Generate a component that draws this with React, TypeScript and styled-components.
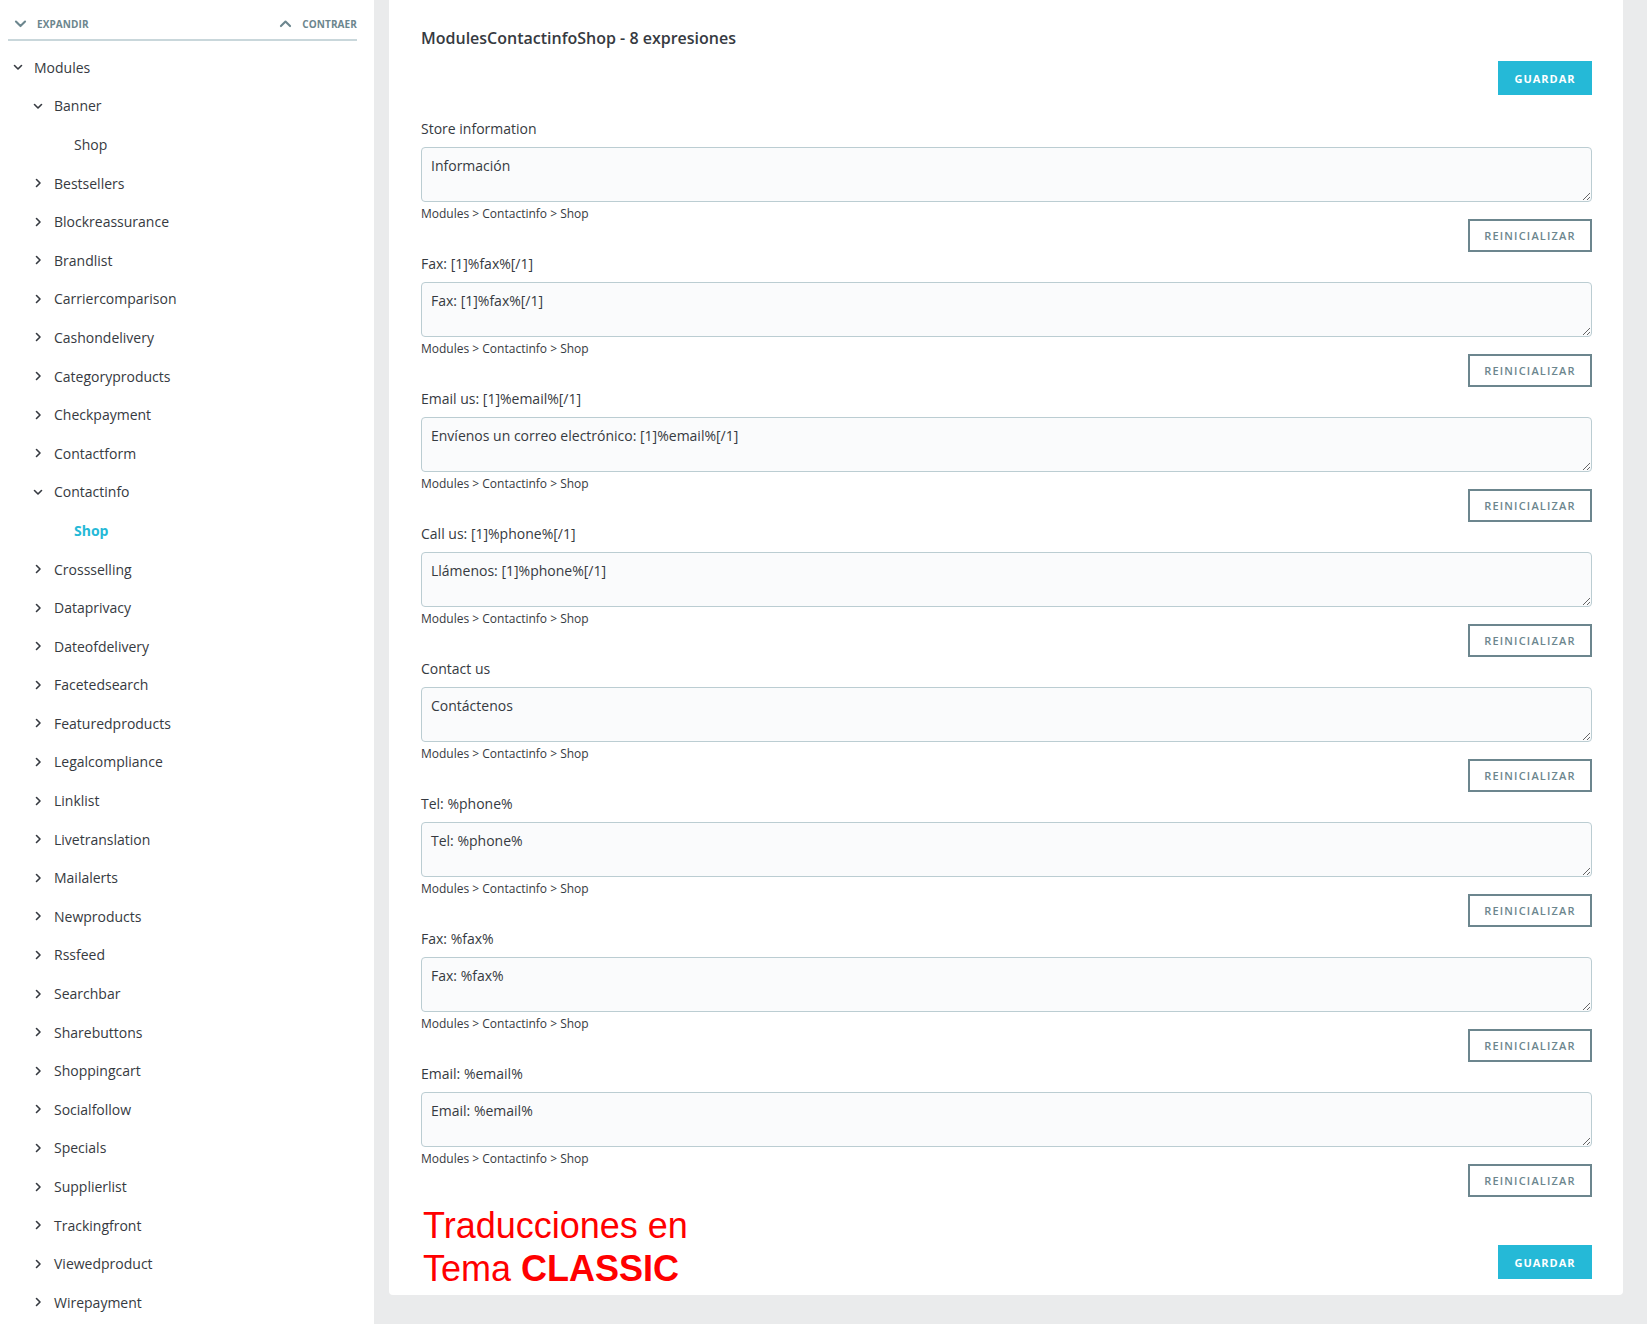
import React from 'react'
import styled, { createGlobalStyle } from 'styled-components'

const GlobalStyle = createGlobalStyle`
  html, body {
    margin: 0;
    padding: 0;
    background: #eaebec;
    font-family: "Open Sans", "Noto Sans", sans-serif;
    color: #363a41;
  }
  * { box-sizing: border-box; }
`;

const Page = styled.div`
  display: flex;
  align-items: stretch;
  min-height: 1324px;
`;

const Sidebar = styled.aside`
  width: 374px;
  flex-shrink: 0;
  background: #fff;
  padding: 0 17px 0 8px;
`;

const TreeHeader = styled.div`
  height: 41px;
  display: flex;
  align-items: center;
  justify-content: space-between;
  border-bottom: 2px solid #c9d7db;
  padding: 8px 0 0 6px;
`;

const HeaderLink = styled.span`
  display: flex;
  align-items: center;
  gap: 10px;
  font-size: 10px;
  font-weight: 700;
  color: #6c868e;
  text-transform: uppercase;
  letter-spacing: 0.1px;
`;

const TreeList = styled.ul`
  list-style: none;
  margin: 0;
  padding: 7px 0 0;
  margin-left: -8px;
`;

const TreeRow = styled.li<{ $level: number; $active?: boolean }>`
  height: 38.6px;
  display: flex;
  align-items: center;
  padding-left: ${p => 13 + p.$level * 20}px;
  font-size: 14px;
  color: ${p => (p.$active ? '#25b9d7' : '#363a41')};
  font-weight: ${p => (p.$active ? 700 : 400)};
`;

const Caret = styled.span`
  width: 10px;
  height: 10px;
  margin-right: 11px;
  display: inline-flex;
  align-items: center;
  justify-content: center;
`;

const Main = styled.main`
  flex: 1;
  padding: 0 24px 28px 15px;
`;

const Card = styled.section`
  background: #fff;
  border-radius: 0 0 4px 4px;
  padding: 26px 31px 5px 32px;
`;

const Title = styled.h2`
  margin: 0;
  font-size: 16px;
  line-height: 24px;
  font-weight: 600;
`;

const TopActions = styled.div`
  display: flex;
  justify-content: flex-end;
  margin: 11px 0 24px;
`;

const PrimaryButton = styled.button`
  width: 94px;
  height: 34px;
  border: none;
  background: #25b9d7;
  color: #fff;
  font-family: inherit;
  font-size: 11px;
  font-weight: 700;
  letter-spacing: 1px;
  text-transform: uppercase;
`;

const Field = styled.div`
  display: flex;
  flex-direction: column;
  margin-bottom: 2px;
`;

const Label = styled.label`
  font-size: 14px;
  line-height: 20px;
  margin-bottom: 8px;
`;

const Area = styled.textarea`
  height: 55px;
  width: 100%;
  resize: vertical;
  background: #fafbfc;
  border: 1px solid #bbcdd2;
  border-radius: 4px;
  padding: 8px 9px;
  font-family: inherit;
  font-size: 14px;
  line-height: 20px;
  color: #363a41;
  outline: none;
`;

const Crumb = styled.div`
  font-size: 12px;
  line-height: 14px;
  margin-top: 5px;
`;

const FieldActions = styled.div`
  display: flex;
  justify-content: flex-end;
  margin-top: -2px;
`;

const OutlineButton = styled.button`
  width: 124px;
  height: 33px;
  background: #fff;
  border: 2px solid #6c868e;
  color: #6c868e;
  font-family: inherit;
  font-size: 11px;
  font-weight: 600;
  letter-spacing: 1.2px;
  text-transform: uppercase;
`;

const Footer = styled.div`
  display: flex;
  justify-content: space-between;
  align-items: flex-end;
  margin-top: 7px;
`;

const Note = styled.div`
  font-family: "Liberation Sans", Arial, sans-serif;
  font-size: 36px;
  line-height: 43px;
  color: #ff0000;
  padding-left: 2px;
  b { font-weight: 700; }
`;

const FooterButton = styled(PrimaryButton)`
  margin-bottom: 11px;
`;

const Chevron = ({ dir, color = '#363a41', size = 10 }: { dir: 'down' | 'right' | 'up'; color?: string; size?: number }) => {
  const pts = dir === 'down' ? '1.5,3.5 5,7 8.5,3.5' : dir === 'up' ? '1.5,7 5,3.5 8.5,7' : '3.5,1.5 7,5 3.5,8.5';
  return (
    <svg width={size} height={size} viewBox="0 0 10 10">
      <polyline points={pts} fill="none" stroke={color} strokeWidth="1.6" strokeLinecap="round" strokeLinejoin="round" />
    </svg>
  );
};

type Node = { label: string; level: number; open?: boolean; leaf?: boolean; active?: boolean };

const names = [
  'Bestsellers', 'Blockreassurance', 'Brandlist', 'Carriercomparison', 'Cashondelivery',
  'Categoryproducts', 'Checkpayment', 'Contactform',
];
const after = [
  'Crossselling', 'Dataprivacy', 'Dateofdelivery', 'Facetedsearch', 'Featuredproducts',
  'Legalcompliance', 'Linklist', 'Livetranslation', 'Mailalerts', 'Newproducts', 'Rssfeed',
  'Searchbar', 'Sharebuttons', 'Shoppingcart', 'Socialfollow', 'Specials', 'Supplierlist',
  'Trackingfront', 'Viewedproduct', 'Wirepayment',
];

const tree: Node[] = [
  { label: 'Modules', level: 0, open: true },
  { label: 'Banner', level: 1, open: true },
  { label: 'Shop', level: 2, leaf: true },
  ...names.map(n => ({ label: n, level: 1 })),
  { label: 'Contactinfo', level: 1, open: true },
  { label: 'Shop', level: 2, leaf: true, active: true },
  ...after.map(n => ({ label: n, level: 1 })),
];

const fields = [
  { label: 'Store information', value: 'Información' },
  { label: 'Fax: [1]%fax%[/1]', value: 'Fax: [1]%fax%[/1]' },
  { label: 'Email us: [1]%email%[/1]', value: 'Envíenos un correo electrónico: [1]%email%[/1]' },
  { label: 'Call us: [1]%phone%[/1]', value: 'Llámenos: [1]%phone%[/1]' },
  { label: 'Contact us', value: 'Contáctenos' },
  { label: 'Tel: %phone%', value: 'Tel: %phone%' },
  { label: 'Fax: %fax%', value: 'Fax: %fax%' },
  { label: 'Email: %email%', value: 'Email: %email%' },
];

export default function App() {
  return (
    <>
      <GlobalStyle />
      <Page>
        <Sidebar>
          <TreeHeader>
            <HeaderLink><Chevron dir="down" color="#6c868e" size={13} />Expandir</HeaderLink>
            <HeaderLink><Chevron dir="up" color="#6c868e" size={13} />Contraer</HeaderLink>
          </TreeHeader>
          <TreeList>
            {tree.map((node, i) => (
              <TreeRow key={i} $level={node.level} $active={node.active}>
                <Caret>{!node.leaf && <Chevron dir={node.open ? 'down' : 'right'} />}</Caret>
                {node.label}
              </TreeRow>
            ))}
          </TreeList>
        </Sidebar>
        <Main>
          <Card>
            <Title>ModulesContactinfoShop - 8 expresiones</Title>
            <TopActions>
              <PrimaryButton>Guardar</PrimaryButton>
            </TopActions>
            {fields.map((f, i) => (
              <Field key={i}>
                <Label>{f.label}</Label>
                <Area defaultValue={f.value} />
                <Crumb>Modules &gt; Contactinfo &gt; Shop</Crumb>
                <FieldActions>
                  <OutlineButton>Reinicializar</OutlineButton>
                </FieldActions>
              </Field>
            ))}
            <Footer>
              <Note>Traducciones en<br />Tema <b>CLASSIC</b></Note>
              <FooterButton>Guardar</FooterButton>
            </Footer>
          </Card>
        </Main>
      </Page>
    </>
  );
}
